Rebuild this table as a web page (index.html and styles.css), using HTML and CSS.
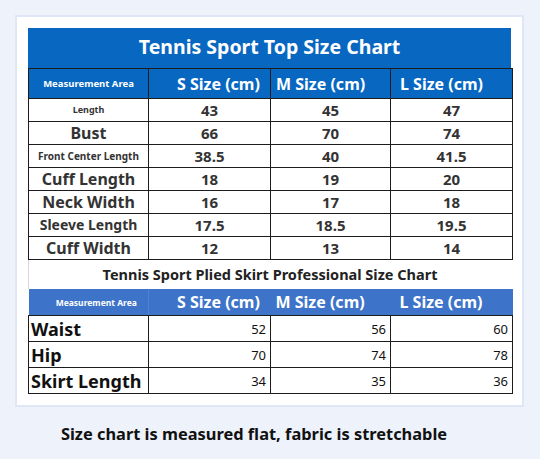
FILE: index.html
```html
<!DOCTYPE html>
<html lang="en">
<head>
  <meta charset="UTF-8" />
  <title>Tennis Sport Size Chart</title>
  <link rel="stylesheet" href="styles.css">
</head>
<body>
  <div class="card">
    <div class="chart-title">Tennis Sport Top Size Chart</div>
    <table class="size-table top-table">
      <colgroup>
        <col class="col-label"><col class="col-s"><col class="col-m"><col class="col-l">
      </colgroup>
      <thead>
        <tr>
          <th class="area">Measurement Area</th>
          <th class="head-s">S Size (cm)</th>
          <th class="head-m">M Size (cm)</th>
          <th class="head-l">L Size (cm)</th>
        </tr>
      </thead>
      <tbody>
        <tr><td class="label tiny">Length</td><td>43</td><td>45</td><td>47</td></tr>
        <tr><td class="label big">Bust</td><td>66</td><td>70</td><td>74</td></tr>
        <tr><td class="label small">Front Center Length</td><td>38.5</td><td>40</td><td>41.5</td></tr>
        <tr><td class="label big">Cuff Length</td><td>18</td><td>19</td><td>20</td></tr>
        <tr><td class="label big">Neck Width</td><td>16</td><td>17</td><td>18</td></tr>
        <tr><td class="label mid">Sleeve Length</td><td>17.5</td><td>18.5</td><td>19.5</td></tr>
        <tr><td class="label big">Cuff Width</td><td>12</td><td>13</td><td>14</td></tr>
      </tbody>
    </table>

    <div class="sub-title">Tennis Sport Plied Skirt Professional Size Chart</div>
    <table class="size-table skirt-table">
      <colgroup>
        <col class="col-label"><col class="col-s"><col class="col-m"><col class="col-l">
      </colgroup>
      <thead>
        <tr>
          <th class="area">Measurement Area</th>
          <th class="head-s">S Size (cm)</th>
          <th class="head-m">M Size (cm)</th>
          <th class="head-l">L Size (cm)</th>
        </tr>
      </thead>
      <tbody>
        <tr><td class="label">Waist</td><td>52</td><td>56</td><td>60</td></tr>
        <tr><td class="label">Hip</td><td>70</td><td>74</td><td>78</td></tr>
        <tr><td class="label">Skirt Length</td><td>34</td><td>35</td><td>36</td></tr>
      </tbody>
    </table>
  </div>

  <p class="note">Size chart is measured flat, fabric is stretchable</p>
</body>
</html>
```

FILE: styles.css
```css
body {
  margin: 0;
  background-color: #eef2fb;
  font-family: "Noto Sans", "Open Sans", sans-serif;
  color: #222;
}

.card {
  margin: 15px 0 0 15px;
  width: 509px;
  height: 392px;
  box-sizing: border-box;
  background-color: #fff;
  border: 2px solid #dfe7f6;
  padding: 11px 11px 0 11px;
}

.chart-title {
  background-color: #0767c1;
  color: #fff;
  font-weight: bold;
  font-size: 19.5px;
  height: 40px;
  line-height: 38px;
  text-align: center;
}

.size-table {
  width: 484px;
  border-collapse: collapse;
  table-layout: fixed;
}

.col-label { width: 120px; }
.col-s { width: 122px; }
.col-m { width: 120px; }
.col-l { width: 122px; }

.size-table th,
.size-table td {
  padding: 0;
  white-space: nowrap;
}

/* header labels sit a little off-centre in the original artwork */
.size-table th.head-s {
  text-align: left;
  padding-left: 28px;
}

.size-table th.head-m {
  text-align: left;
  padding-left: 5px;
}

.size-table th.head-l {
  text-align: left;
  padding-left: 9px;
}

/* top chart */
.top-table th,
.top-table td {
  border: 1.5px solid #1c1c1c;
  text-align: center;
}

.top-table th {
  background-color: #0767c1;
  color: #fff;
  height: 29px;
  font-size: 16px;
}

.top-table th.area {
  font-size: 9.5px;
}

.top-table td {
  height: 22px;
  font-size: 15px;
  font-weight: bold;
  color: #333;
  line-height: 20px;
}

.top-table td.label.tiny { font-size: 9px; }
.top-table td.label.small { font-size: 10px; }
.top-table td.label.mid { font-size: 14px; }
.top-table td.label.big { font-size: 16px; }

.sub-title {
  height: 29px;
  line-height: 28px;
  border-left: 1px solid #d6d6d6;
  text-align: center;
  font-size: 14.5px;
  font-weight: bold;
  color: #222;
}

/* skirt chart */
.skirt-table th {
  background-color: #3d73c9;
  color: #fff;
  height: 26px;
  font-size: 16px;
  border: none;
  border-bottom: 1.5px solid #1c1c1c;
}

.skirt-table th.area {
  font-size: 8.5px;
  text-align: center;
  padding-left: 16px;
  border-right: 1px solid #4f82d0;
}

.skirt-table td {
  border: 1.5px solid #1c1c1c;
  height: 25px;
  font-size: 13px;
  text-align: right;
  padding-right: 4px;
  color: #111;
}

.skirt-table td.label {
  text-align: left;
  font-size: 18px;
  font-weight: bold;
  padding: 0 0 0 2px;
}

.note {
  margin: 15px 0 0;
  width: 508px;
  text-align: center;
  font-size: 16.4px;
  font-weight: bold;
  color: #111;
}
```
